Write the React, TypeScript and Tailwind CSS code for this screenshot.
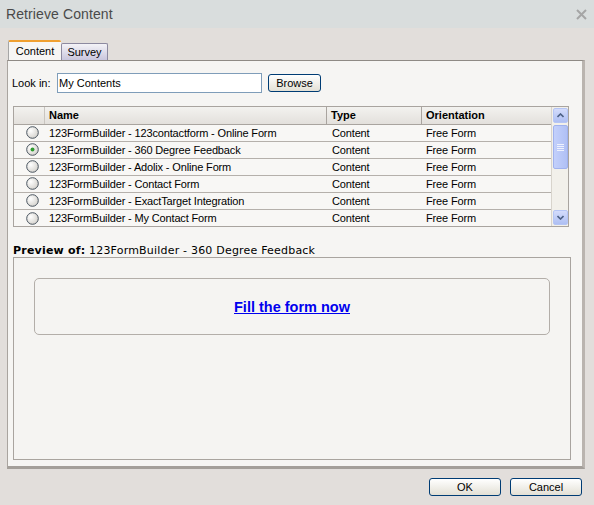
import React from "react";

const rows = [
  "123FormBuilder - 123contactform - Online Form",
  "123FormBuilder - 360 Degree Feedback",
  "123FormBuilder - Adolix - Online Form",
  "123FormBuilder - Contact Form",
  "123FormBuilder - ExactTarget Integration",
  "123FormBuilder - My Contact Form",
];

function Radio({ checked }: { checked?: boolean }) {
  return (
    <svg width="13" height="13" viewBox="0 0 13 13">
      <defs>
        <radialGradient id="rg" cx="0.35" cy="0.35" r="0.8">
          <stop offset="0" stopColor="#ffffff" />
          <stop offset="1" stopColor="#cfccc6" />
        </radialGradient>
      </defs>
      <circle cx="6.5" cy="6.5" r="5.8" fill="url(#rg)" stroke="#4a5560" strokeWidth="1" />
      {checked && <circle cx="6.5" cy="6.5" r="2" fill="#2f9a2f" />}
    </svg>
  );
}

export default function App() {
  const font = { fontFamily: '"Liberation Sans", Arial, sans-serif' };
  return (
    <div className="w-[594px] h-[505px] bg-[#e2dedb] flex flex-col overflow-hidden" style={font}>
      <div className="h-[28px] bg-[#d9dddd] flex items-center justify-between pl-[6px] pr-[7px]">
        <span className="text-[14px] tracking-[0.1px] text-[#4a4a4a] leading-none">Retrieve Content</span>
        <svg width="11" height="11" viewBox="0 0 11 11">
          <path d="M1 1 L10 10 M10 1 L1 10" stroke="#a5a5a5" strokeWidth="2" />
        </svg>
      </div>
      <div className="flex items-end h-[20px] mt-[12px] ml-[8px]">
        <div className="h-[20px] w-[53px] bg-[#f7f6f4] border-t-2 border-t-[#f0a030] border-l border-l-[#a6a6a6] rounded-t-[2px] flex items-center justify-center text-[11px] text-black">
          Content
        </div>
        <div className="h-[17px] w-[47px] bg-gradient-to-b from-[#f4f3f7] to-[#c9c6dd] border border-[#8d8aa0] border-b-0 rounded-t-[2px] flex items-center justify-center text-[11px] text-black">
          Survey
        </div>
      </div>
      <div className="ml-[7px] w-[578px] h-[409px] bg-[#f6f5f3] border-t border-t-[#8f8a85] border-l border-l-[#a9a49f] border-r-[3px] border-r-[#bab4af] border-b-[3px] border-b-[#a49f9a] flex flex-col">
        <div className="flex items-center mt-[12px] h-[20px]">
          <span className="ml-[4px] text-[11px] text-black w-[45px]">Look in:</span>
          <div className="w-[205px] h-[20px] border border-[#7f9db9] bg-white flex items-center pl-[1px] text-[11px] text-black">
            My Contents
          </div>
          <button className="ml-[6px] w-[53px] h-[18px] rounded-[3px] border border-[#003c74] bg-gradient-to-b from-[#ffffff] to-[#e3e0d5] text-[11px] text-black flex items-center justify-center">
            Browse
          </button>
        </div>
        <div className="ml-[5px] mt-[13px] w-[556px] h-[121px] border border-[#a9a49f] flex bg-[#f8f7f5]">
          <div className="flex-1 flex flex-col">
            <div className="h-[18px] flex bg-gradient-to-b from-[#f3f2ef] to-[#e3e0dc] border-b border-[#a9a49f] text-[11px] font-bold text-black">
              <div className="w-[31px] border-r border-[#c9c5c0]" />
              <div className="w-[282px] border-r border-[#a9a49f] pl-[4px] flex items-center">Name</div>
              <div className="w-[95px] border-r border-[#a9a49f] pl-[4px] flex items-center">Type</div>
              <div className="flex-1 pl-[4px] flex items-center">Orientation</div>
            </div>
            {rows.map((r, i) => (
              <div key={i} className="h-[17px] flex items-center border-b border-[#b5b0ab] last:border-b-0 text-[11px] tracking-[-0.15px] text-black">
                <div className="w-[31px] flex items-center justify-center pl-[5px]">
                  <Radio checked={i === 1} />
                </div>
                <div className="w-[282px] pl-[4px] pt-[1px] whitespace-nowrap">{r}</div>
                <div className="w-[95px] pl-[5px] pt-[1px]">Content</div>
                <div className="flex-1 pl-[4px] pt-[1px]">Free Form</div>
              </div>
            ))}
          </div>
          <div className="w-[17px] bg-[#f2f0ea] border-l border-[#d8d4cc] flex flex-col items-center py-[1px]">
            <div className="w-[15px] h-[15px] rounded-[2px] bg-gradient-to-b from-[#d4dcfb] to-[#aebff3] border border-[#b5c5f5] flex items-center justify-center">
              <svg width="7" height="5" viewBox="0 0 7 5">
                <path d="M0.5 4 L3.5 1 L6.5 4" stroke="#4d6185" strokeWidth="1.6" fill="none" />
              </svg>
            </div>
            <div className="w-[15px] h-[44px] mt-[2px] rounded-[2px] bg-gradient-to-r from-[#c3d0fb] to-[#b0c0f5] border border-[#a0b2ee] flex flex-col items-center justify-center gap-[1px]">
              <div className="w-[7px] h-[1px] bg-[#eef2fe]" />
              <div className="w-[7px] h-[1px] bg-[#eef2fe]" />
              <div className="w-[7px] h-[1px] bg-[#eef2fe]" />
              <div className="w-[7px] h-[1px] bg-[#eef2fe]" />
            </div>
            <div className="flex-1" />
            <div className="w-[15px] h-[15px] rounded-[2px] bg-gradient-to-b from-[#d4dcfb] to-[#aebff3] border border-[#b5c5f5] flex items-center justify-center">
              <svg width="7" height="5" viewBox="0 0 7 5">
                <path d="M0.5 1 L3.5 4 L6.5 1" stroke="#4d6185" strokeWidth="1.6" fill="none" />
              </svg>
            </div>
          </div>
        </div>
        <div
          className="ml-[5px] mt-[18px] text-[11px] tracking-[0.2px] text-black leading-none whitespace-nowrap"
          style={{ fontFamily: '"DejaVu Sans", Verdana, sans-serif' }}
        >
          <span className="font-bold">Preview of:</span> 123FormBuilder - 360 Degree Feedback
        </div>
        <div className="ml-[5px] mt-[1px] w-[558px] h-[203px] border border-[#a9a49f] bg-[#f5f4f2] pt-[20px] pl-[20px]">
          <div className="w-[516px] h-[57px] border border-[#b3aea9] rounded-[5px] flex items-center justify-center pt-[3px]">
            <a href="#" className="text-[14.5px] font-bold text-[#0000ee] underline">Fill the form now</a>
          </div>
        </div>
      </div>
      <div className="flex justify-end mt-[9px] mr-[12px] gap-[9px]">
        <button className="w-[72px] h-[18px] rounded-[3px] border border-[#003c74] bg-gradient-to-b from-[#ffffff] to-[#e3e0d5] text-[11px] text-black flex items-center justify-center">
          OK
        </button>
        <button className="w-[72px] h-[18px] rounded-[3px] border border-[#003c74] bg-gradient-to-b from-[#ffffff] to-[#e3e0d5] text-[11px] text-black flex items-center justify-center">
          Cancel
        </button>
      </div>
    </div>
  );
}
